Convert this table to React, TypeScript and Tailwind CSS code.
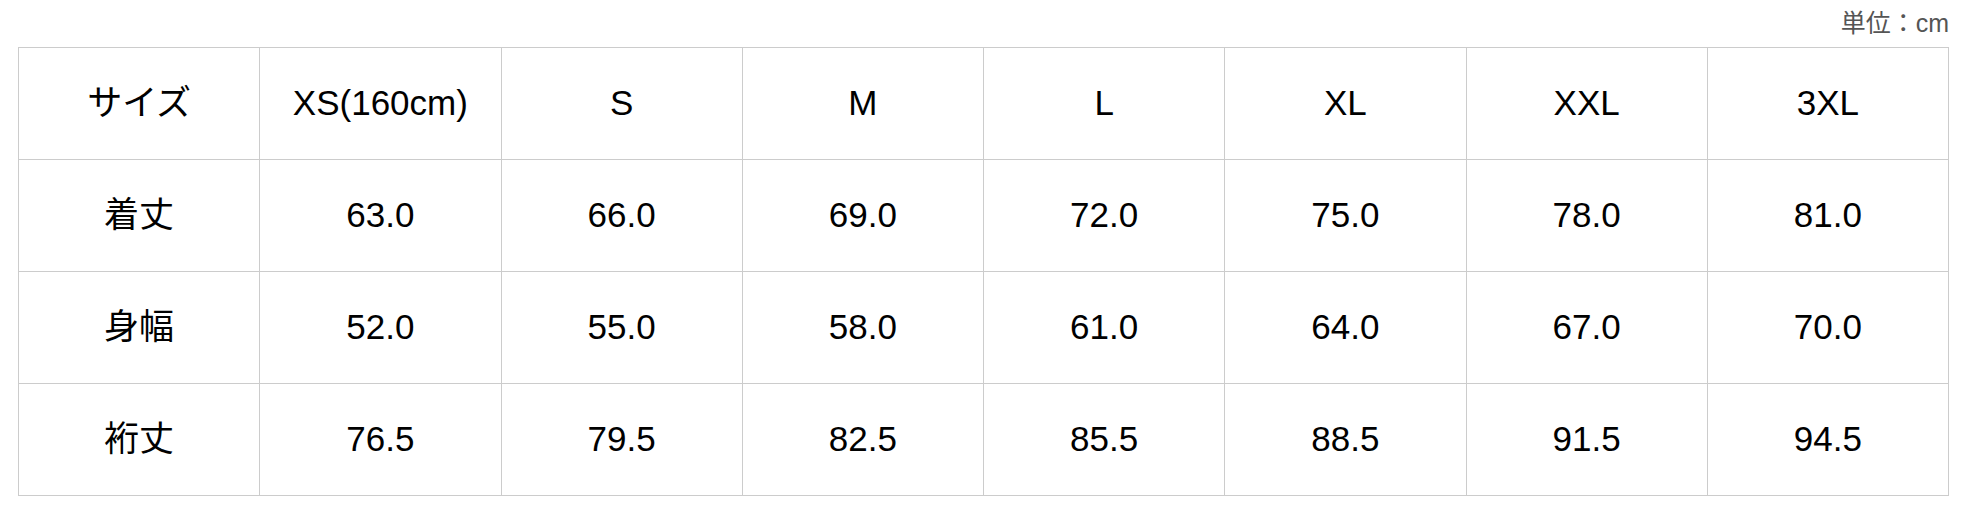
const headers = ['サイズ', 'XS(160cm)', 'S', 'M', 'L', 'XL', 'XXL', '3XL']

const rows = [
    { label: '着丈', values: ['63.0', '66.0', '69.0', '72.0', '75.0', '78.0', '81.0'] },
    { label: '身幅', values: ['52.0', '55.0', '58.0', '61.0', '64.0', '67.0', '70.0'] },
    { label: '裄丈', values: ['76.5', '79.5', '82.5', '85.5', '88.5', '91.5', '94.5'] }
]

const cell = 'h-[112px] border border-[#cccccc] text-center align-middle font-normal'

export default function App(): JSX.Element {
    return (
        <div
            className="bg-white pl-[18px] pr-[35px] text-black"
            style={{ fontFamily: '"Liberation Sans", "Noto Sans CJK JP", sans-serif' }}
        >
            <div className="flex h-[47px] items-center justify-end text-[25px] text-[#555555]">
                単位：cm
            </div>
            <table className="w-full table-fixed border-collapse text-[35px]">
                <thead>
                    <tr>
                        {headers.map((h) => (
                            <th key={h} className={cell}>
                                {h}
                            </th>
                        ))}
                    </tr>
                </thead>
                <tbody>
                    {rows.map((row) => (
                        <tr key={row.label}>
                            <td className={cell}>{row.label}</td>
                            {row.values.map((v, i) => (
                                <td key={i} className={cell}>
                                    {v}
                                </td>
                            ))}
                        </tr>
                    ))}
                </tbody>
            </table>
        </div>
    )
}
